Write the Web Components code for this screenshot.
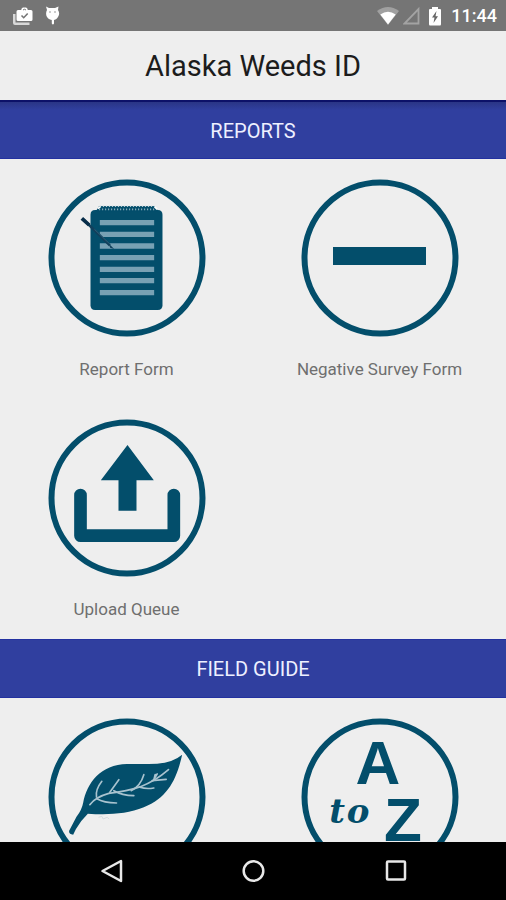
<!DOCTYPE html>
<html lang="en">
<head>
<meta charset="utf-8">
<meta name="viewport" content="width=device-width, initial-scale=1">
<title>Alaska Weeds ID</title>
<style>
  html, body { height: 100%; margin: 0; }
  body { font-family: Roboto, "Liberation Sans", sans-serif; background: #eee; --teal: #034e6b; }
</style>
</head>
<body>
<weeds-app>
  <status-bar slot="status" time="11:44"></status-bar>
  <app-title slot="title">Alaska Weeds ID</app-title>
  <menu-section heading="REPORTS" shaded>
    <menu-tile icon="report">Report Form</menu-tile>
    <menu-tile icon="minus">Negative Survey Form</menu-tile>
    <menu-tile icon="upload">Upload Queue</menu-tile>
  </menu-section>
  <menu-section heading="FIELD GUIDE">
    <menu-tile icon="leaf" name="Leaf"></menu-tile>
    <menu-tile icon="atoz" name="A to Z"></menu-tile>
  </menu-section>
  <nav-bar slot="nav"></nav-bar>
</weeds-app>

<script>
class Base extends HTMLElement {
  constructor() { super(); this.attachShadow({ mode: "open" }); }
  connectedCallback() { this.shadowRoot.innerHTML = this.render(); }
}

customElements.define("weeds-app", class extends Base {
  render() {
    return `<style>
      :host { display: flex; flex-direction: column; height: 100vh; }
      main { flex: 1; min-height: 0; overflow: auto; scrollbar-width: none; }
    </style>
    <slot name="status"></slot><slot name="title"></slot>
    <main><slot></slot></main><slot name="nav"></slot>`;
  }
});

customElements.define("status-bar", class extends Base {
  render() {
    return `<style>
      :host { display: flex; align-items: center; height: 31px; flex: none; box-sizing: border-box;
        padding: 0 9px 0 12px; background: #757575; color: #fff; }
      .left { display: flex; gap: 12px; flex: 1; }
      .right { display: flex; align-items: center; gap: 4px; }
      svg { display: block; }
      time { font-size: 18px; line-height: 24px; font-weight: 500; margin-left: 2px; }
    </style>
    <div class="left">
      <svg width="22" height="22" viewBox="0 0 22 22" aria-hidden="true">
        <path d="M1 9h2.500v8.500h14V20H3Q1 20 1 18z" fill="#d8d8d8"/>
        <path d="M6 5h3.200Q9.500 2.500 11 2.500h3Q15.500 2.500 15.800 5H19q1.500 0 1.500 1.500v8q0 1.500-1.500 1.500H6q-1.500 0-1.500-1.500v-8Q4.500 5 6 5z" fill="#fff"/>
        <path d="M11 5q1.500-1.500 3 0" stroke="#757575" fill="none"/>
        <path d="M9.500 10.500l2.200 2.200 4-4.200" fill="none" stroke="#757575" stroke-width="1.600"/>
      </svg>
      <svg width="14" height="22" viewBox="0 0 14 22" aria-hidden="true">
        <path d="M0 1.500l3 1.500h6l3.500-1.500-.5 3.500q2 3 .5 6-1.500 3.500-4.500 4v3.500q-1 2-2.200 0V15Q2 14.500.5 11q-1-3 .5-6z" fill="#fff"/>
        <path d="M3 7h2M8 7h2" stroke="#999"/>
      </svg>
    </div>
    <div class="right">
      <svg width="22" height="20" viewBox="0 0 22 20" aria-hidden="true">
        <path d="M0 5Q11-3 22 5L11 19z" fill="#a0a0a0"/>
        <path d="M3.300 8.500Q11 3 18.700 8.500L11 18.500z" fill="#fff"/>
      </svg>
      <svg width="18" height="20" viewBox="0 0 18 20" aria-hidden="true">
        <path d="M15.500 3v14.500H1.500z" fill="none" stroke="#a3a3a3" stroke-width="1.800"/>
      </svg>
      <svg width="20" height="22" viewBox="0 0 20 22" aria-hidden="true">
        <path d="M7 2h6v2h2q1 0 1 1v14q0 1.500-1 1.500H5q-1 0-1-1.500V5q0-1 1-1h2z" fill="#fff"/>
        <path d="M11.500 6L7 12.500h2.500L8.500 18 13 11.200h-2.500z" fill="#666"/>
      </svg>
      <time>${this.getAttribute("time")}</time>
    </div>`;
  }
});

customElements.define("app-title", class extends Base {
  render() {
    return `<style>
      :host { display: block; flex: none; background: #eee; }
      h1 { margin: 0; padding: 17px 0 15px; text-align: center; font-size: 29px; line-height: 37px; font-weight: 400; color: #1c1c1c; }
    </style><h1><slot></slot></h1>`;
  }
});

customElements.define("menu-section", class extends Base {
  render() {
    return `<style>
      :host { display: block; }
      h2 { margin: 0; box-sizing: border-box; height: 59px; text-align: center; color: #eef0ff; font-size: 20px;
        font-weight: 400; line-height: 59px; background: #303f9f; border: solid #2331a0; border-width: 1px 0; }
      :host([shaded]) h2 { border-top: 2px solid #0c1168; line-height: 58px;
        background: linear-gradient(#2a3585, #303f9f 8px); }
      div { display: grid; grid-template-columns: 1fr 1fr; }
    </style>
    <h2>${this.getAttribute("heading")}</h2><div><slot></slot></div>`;
  }
});

const stripes = [158, 193, 228, 263, 298, 332, 368]
  .map(y => `<path d="M178 ${y}H341" stroke="#78a1b4" stroke-width="16"/>`).join("");

const icons = {
  report: `<g transform="translate(-7.500 -9) scale(.3333)">
    <path d="M164 120H352Q366 120 366 134V406Q366 420 352 420H164Q150 420 150 406V134Q150 120 164 120z"/>
    <path d="M176 108H342L354 124H166z"/>
    <path d="M178 109H342" stroke="#b4c9d2" stroke-width="4" stroke-dasharray="4 5"/>
    <path d="M176 118H346" stroke="#9fbac6" stroke-width="5" stroke-dasharray="3 6"/>
    <path d="M172 116l8-6M342 110l8 8" stroke="#fff" stroke-width="5"/>
    ${stripes}
    <path d="M126 146L208 226" stroke="#12405c" stroke-width="8"/>
    <path d="M162 178L210 224" stroke="#3c7189" stroke-width="2"/>
    <path d="M124 145L146 165" stroke="#082d49" stroke-width="11"/>
    <path d="M204 220l17 17-12-4z" fill="#12405c"/></g>`,
  minus: `<path d="M32 68H125V86H32z"/>`,
  upload: `<g transform="translate(-7.500 -9) scale(.3333)">
    <path d="M261 105L340 211H288V302H234V211H181z"/>
    <path d="M120 255V377H400V255" fill="none" stroke="var(--teal)" stroke-width="38" stroke-linecap="round" stroke-linejoin="round"/></g>`,
  leaf: `<g transform="translate(-7.500 -18) scale(.3333)">
    <path d="M425 164Q398 187 350 191Q315 193 260 192C180 194 140 248 128 308Q124 330 108 350L86 392Q84 404 98 404L106 388Q120 362 142 341C200 345 258 343 310 322C382 292 408 240 425 164z"/>
    <g fill="none" stroke="#a9c3cf" stroke-width="5" stroke-linecap="round" stroke-linejoin="round">
      <path d="M148 314Q165 291 205 280Q260 274 300 260Q345 243 384 209"/>
      <path d="M168 291Q164 270 184 244M169 296Q190 308 228 309M208 277L235 239M220 272Q245 286 280 287M272 272Q300 258 310 224M298 262Q318 268 340 264M337 243L350 222M335 242L377 238M344 224L340 240"/>
    </g>
    <path d="M174 352l10-3 4 8 12-5 6 5" fill="none" stroke="#c9d2d6" stroke-width="2"/></g>`,
  atoz: `<g text-anchor="middle">
    <text x="77" y="66" font-family="Liberation Sans, sans-serif" font-size="62" font-weight="700">A</text>
    <text x="36" y="105" font-family="DejaVu Serif, serif" font-size="34" font-weight="700" font-style="italic">t</text>
    <text x="57" y="105" font-family="DejaVu Serif, serif" font-size="34" font-weight="700" font-style="italic">o</text>
    <text x="102" y="123" font-family="Liberation Sans, sans-serif" font-size="62" font-weight="700">Z</text></g>`
};

customElements.define("menu-tile", class extends Base {
  render() {
    const name = this.getAttribute("name");
    return `<style>
      :host { display: block; }
      button { display: flex; flex-direction: column; align-items: center; width: 100%; height: 240px; margin: 0;
        padding: 20px 0 0; border: 0; background: none; font: inherit; color: #6f6f6f; cursor: pointer; }
      svg { display: block; flex: none; fill: var(--teal); }
      span { margin-top: 20px; font-size: 17px; line-height: 24px; }
    </style>
    <button type="button" ${name ? `aria-label="${name}"` : ""}>
      <svg width="158" height="158" viewBox="0 0 158 158" aria-hidden="true">
        <circle cx="79" cy="79" r="75.500" fill="none" stroke="var(--teal)" stroke-width="6"/>
        ${icons[this.getAttribute("icon")]}
      </svg>
      <span><slot></slot></span>
    </button>`;
  }
});

customElements.define("nav-bar", class extends Base {
  render() {
    return `<style>
      :host { display: flex; justify-content: center; align-items: center; gap: 94px; height: 58px; flex: none; background: #000; }
      button { width: 48px; height: 48px; padding: 0; border: 0; background: none; display: grid; place-items: center; }
      svg { display: block; fill: none; stroke: #e8e8e8; stroke-width: 2.500; stroke-linejoin: round; }
    </style>
    <button type="button" aria-label="Back"><svg width="24" height="24" viewBox="0 0 24 24"><path d="M22 2V22L3.500 12z"/></svg></button>
    <button type="button" aria-label="Home"><svg width="24" height="24" viewBox="0 0 24 24"><circle cx="12.500" cy="12" r="9.800"/></svg></button>
    <button type="button" aria-label="Recent apps"><svg width="24" height="24" viewBox="0 0 24 24"><rect x="4" y="2.500" width="18" height="18" rx="1"/></svg></button>`;
  }
});
</script>
</body>
</html>
